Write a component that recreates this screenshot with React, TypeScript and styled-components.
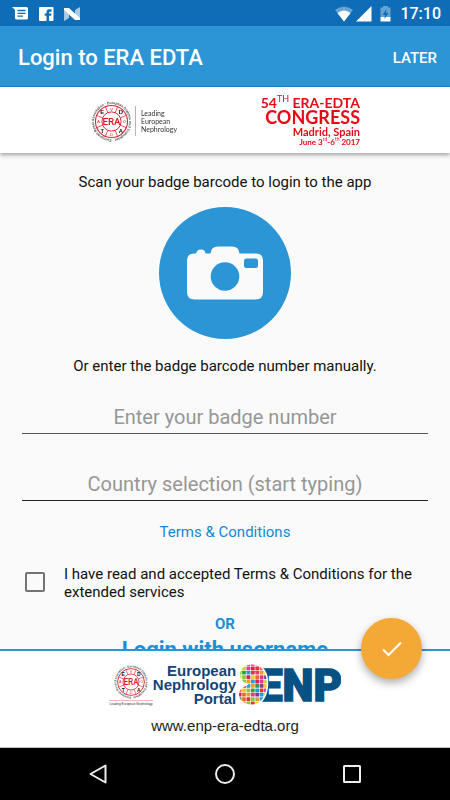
import React from "react";
import styled, { createGlobalStyle } from "styled-components";

const GlobalStyle = createGlobalStyle`
  * { box-sizing: border-box; }
  body { margin: 0; background: #fafafa; font-family: Roboto, sans-serif; }
  button, input { font: inherit; }
`;

const Screen = styled.div`
  height: 100vh;
  display: flex;
  flex-direction: column;
  color: #111;
  font-size: 15px;
`;

const StatusBar = styled.div`
  flex: none;
  height: 26px;
  padding: 2px 9px 0 12px;
  display: flex;
  align-items: center;
  justify-content: space-between;
  background: #0f6db7;
  color: #fff;
`;

const StatusGroup = styled.div<{ $gap: number }>`
  display: flex;
  align-items: center;
  gap: ${(p) => p.$gap}px;
`;

const Clock = styled.time`
  padding-left: 4px;
  font-size: 16px;
  font-weight: 500;
  line-height: 20px;
`;

const AppBar = styled.header`
  flex: none;
  height: 61px;
  padding: 3px 13px 0 18px;
  display: flex;
  align-items: center;
  justify-content: space-between;
  background: #2b95d5;
  border-bottom: 1px solid #1489d2;
  color: #fff;
`;

const Title = styled.h1`
  margin: 0;
  font-size: 22px;
  font-weight: 500;
`;

const LaterButton = styled.button`
  padding: 0;
  border: 0;
  background: none;
  color: #fff;
  font-size: 15px;
  font-weight: 500;
  cursor: pointer;
`;

const Banner = styled.section`
  flex: none;
  z-index: 1;
  height: 66px;
  padding: 2px 0 0;
  display: grid;
  grid-template-columns: 1fr 1fr;
  align-items: center;
  background: #fff;
  box-shadow: 0 2px 4px rgba(0, 0, 0, 0.35);
`;

const Society = styled.div`
  justify-self: center;
  padding-left: 42px;
  display: flex;
  align-items: center;
`;

const SocietyName = styled.div`
  margin-left: 2px;
  padding: 3px 0 3px 5px;
  border-left: 1px solid #e3a0a8;
  color: #333;
  font-family: Lato, sans-serif;
  font-size: 7px;
  line-height: 8px;
`;

const Congress = styled.div`
  justify-self: end;
  margin-right: 90px;
  display: flex;
  flex-direction: column;
  align-items: flex-end;
  color: #e60a14;
  font-family: Lato, sans-serif;
  font-weight: 700;
  white-space: nowrap;
`;

const CongressLine = styled.div<{ $size: number; $height: number }>`
  font-size: ${(p) => p.$size}px;
  line-height: ${(p) => p.$height}px;
`;

const Ordinal = styled.sup<{ $size: number }>`
  font-size: ${(p) => p.$size}px;
  font-weight: 400;
  line-height: 0;
`;

const Main = styled.main`
  flex: 1;
  min-height: 0;
  overflow-y: auto;
  scrollbar-width: none;
  padding: 19px 22px 0;
  display: flex;
  flex-direction: column;
  align-items: center;
  background: #fafafa;
  & > * { flex: none; }
`;

const Hint = styled.p`
  margin: 0;
  line-height: 20px;
  text-align: center;
`;

const ScanButton = styled.button`
  margin: 15px 0 17px;
  width: 132px;
  height: 132px;
  padding: 0;
  border: 0;
  border-radius: 50%;
  background: #2b95d5;
  cursor: pointer;
  svg { display: block; margin: 0 auto; }
`;

const Field = styled.input<{ $line: string }>`
  width: 100%;
  height: 34px;
  margin-top: 24px;
  padding: 0;
  border: 0;
  border-bottom: 1px solid ${(p) => p.$line};
  border-radius: 0;
  outline: 0;
  background: none;
  color: #111;
  font-size: 20px;
  text-align: center;
  & + & { margin-top: 33px; }
  &::placeholder { color: #969696; opacity: 1; }
`;

const TermsLink = styled.a`
  margin-top: 21px;
  line-height: 20px;
  color: #1588d0;
  text-decoration: none;
`;

const Consent = styled.label`
  align-self: stretch;
  margin-top: 23px;
  padding-left: 3px;
  display: grid;
  grid-template-columns: 20px 1fr;
  column-gap: 19px;
  align-items: center;
  line-height: 18px;
`;

const Checkbox = styled.input`
  appearance: none;
  width: 20px;
  height: 20px;
  margin: 0 0 2px;
  border: 2px solid #737373;
  border-radius: 2px;
  &:checked { background: #2b95d5; }
`;

const Or = styled.div`
  margin-top: 13px;
  line-height: 20px;
  color: #1a8fd6;
  font-weight: 700;
`;

const UsernameLink = styled.a`
  margin-top: 2px;
  line-height: 28px;
  color: #1a8fd6;
  font-size: 22px;
  font-weight: 700;
  text-decoration: none;
`;

const Footer = styled.footer`
  flex: none;
  position: relative;
  height: 99px;
  padding-top: 13px;
  display: flex;
  flex-direction: column;
  align-items: center;
  background: #fff;
  border-top: 2px solid #2b95d5;
  border-bottom: 1px solid #b9bfbd;
`;

const Portal = styled.div`
  display: flex;
  height: 42px;
`;

const SealColumn = styled.div`
  width: 44px;
  display: flex;
  flex-direction: column;
  align-items: center;
`;

const PortalName = styled.div`
  margin-right: 2px;
  color: #134478;
  font-family: "Liberation Sans", sans-serif;
  font-size: 15px;
  font-weight: 700;
  line-height: 14px;
  text-align: right;
`;

const SiteLink = styled.a`
  margin-top: 10px;
  color: #222;
  font-family: "Liberation Sans", sans-serif;
  font-size: 15px;
  line-height: 20px;
  text-decoration: none;
`;

const ConfirmButton = styled.button`
  position: absolute;
  z-index: 2;
  top: -33px;
  right: 28px;
  width: 61px;
  height: 61px;
  padding: 0;
  border: 0;
  border-radius: 50%;
  display: grid;
  place-items: center;
  background: #f4a836;
  box-shadow: 0 4px 8px rgba(0, 0, 0, 0.32);
  cursor: pointer;
`;

const NavBar = styled.nav`
  flex: none;
  height: 52px;
  padding: 0 36px;
  display: flex;
  align-items: center;
  justify-content: center;
  gap: 64px;
  background: #000;
`;

const NavButton = styled.button`
  width: 63px;
  height: 40px;
  padding: 0;
  border: 0;
  display: grid;
  place-items: center;
  background: none;
  cursor: pointer;
`;

const diagonalLetters = [
  { c: "E", x: 12.5, y: 14.5 },
  { c: "D", x: 31.5, y: 14.5 },
  { c: "T", x: 12.5, y: 34 },
  { c: "A", x: 31.5, y: 34 },
];
const axisLetters = [
  { c: "V", x: 22, y: 11 },
  { c: "O", x: 35.3, y: 23.5 },
  { c: "D", x: 22, y: 36.5 },
  { c: "A", x: 8.7, y: 23.5 },
];

function Seal({ size, id }: { size: number; id: string }) {
  return (
    <svg width={size} height={size} viewBox="0 0 44 44" role="img" aria-label="ERA EDTA seal">
      <defs>
        <path id={id} d="M22 40 A18 18 0 1 1 22.1 40" />
      </defs>
      <text fontFamily="Liberation Sans, sans-serif" fontSize="3.6" fontWeight="700" fill="#444">
        <textPath href={`#${id}`}>European Renal Association · European Dialysis and Transplant</textPath>
      </text>
      <circle cx="22" cy="22" r="16.4" fill="#fff" stroke="#e0222f" strokeWidth="1.1" />
      <circle cx="22" cy="22" r="9.8" fill="none" stroke="#e0222f" strokeWidth="1" />
      <g stroke="#e0222f" strokeWidth="0.7">
        {[22.5, 67.5, 112.5, 157.5, 202.5, 247.5, 292.5, 337.5].map((a) => (
          <path key={a} d="M31.8 22 H38.4" transform={`rotate(${a} 22 22)`} />
        ))}
      </g>
      <g fontFamily="Liberation Sans, sans-serif" textAnchor="middle">
        {diagonalLetters.map((l) => (
          <text key={l.c} x={l.x} y={l.y} fontSize="6" fontWeight="700" fill="#111">{l.c}</text>
        ))}
        {axisLetters.map((l, i) => (
          <text key={i} x={l.x} y={l.y} fontSize="4.5" fill="#e0222f">{l.c}</text>
        ))}
      </g>
      <text x="22" y="25.6" fontFamily="Roboto, sans-serif" fontSize="10" fontWeight="500" fill="#e0121f" textAnchor="middle">ERA</text>
    </svg>
  );
}

const tones = ["#f39b1f", "#e5352b", "#2a9d50", "#f7c52b", "#e8368f", "#1f9fd8", "#8cc63e", "#ee6a28", "#7c3f98", "#c9d532", "#d91c5c"];

function EnpLogo() {
  return (
    <svg width="103" height="42" viewBox="0 0 103 42" role="img" aria-label="ENP">
      <defs>
        <clipPath id="kidney">
          <path d="M14 .5 C22 .5 27 6 28.5 15 C30 29 24 40.5 14 40.5 C6 40.5 1 36 1 30.5 C1 25.5 5 23 11 20.5 C5 18.5 2 15 2 11 C2 4.5 7 .5 14 .5Z" />
        </clipPath>
      </defs>
      <text x="20" y="37" fontFamily="Roboto, sans-serif" fontSize="44" fontWeight="900" fill="#075184" stroke="#075184" strokeWidth="1.5">ENP</text>
      <path d="M14 -.5 C23 -.5 29 6 30 15 C31.5 30 25 42 14 42 L14 20Z" fill="#fff" />
      <g clipPath="url(#kidney)">
        {Array.from({ length: 70 }, (_, i) => {
          const col = i % 7;
          const row = Math.floor(i / 7);
          return <rect key={i} x={col * 4.4 - 0.3} y={row * 4.4 - 2} width="3.8" height="3.8" rx="0.4" fill={tones[(col * 5 + row * 3 + ((col * row) % 4)) % tones.length]} />;
        })}
      </g>
    </svg>
  );
}

export default function App() {
  return (
    <>
      <GlobalStyle />
      <Screen>
        <StatusBar>
          <StatusGroup $gap={10}>
            <svg width="17" height="16" viewBox="0 0 17 16" aria-label="Message">
              <path d="M0 1 H14.5 Q16 1 16 2.5 V12 Q16 13.5 14.5 13.5 H4.5 Q3 13.5 3 12 V4Z" fill="#fff" />
              <path d="M5.5 4.5 H13.5 M5.5 7.3 H13.5 M5.5 10.1 H11" stroke="#0f6db7" strokeWidth="1.3" />
            </svg>
            <svg width="15" height="16" viewBox="0 0 15 16" aria-label="Facebook">
              <rect x="0" y="1" width="14.5" height="14" rx="1" fill="#fff" />
              <path d="M7.5 15 V9.8 H5.7 V7.4 H7.5 V6 Q7.5 3.3 10.3 3.3 H12.5 V5.7 H11 Q10.1 5.7 10.1 6.6 V7.4 H12.5 L12.1 9.8 H10.1 V15Z" fill="#0f6db7" />
            </svg>
            <svg width="17" height="16" viewBox="0 0 17 16" aria-label="Android N">
              <path d="M0 2 L5 6 V12 L0 15Z M11 4 L16 1 V14 L11 10Z" fill="#a9cae5" />
              <path d="M0 2 H5 L16 12 V14 H11 L0 4Z" fill="#fff" />
            </svg>
          </StatusGroup>
          <StatusGroup $gap={3}>
            <svg width="18" height="16" viewBox="0 0 18 16" aria-label="Wi-Fi">
              <path d="M0 4 Q9 -3 18 4 L9 15.5Z" fill="#65a3d2" />
              <path d="M2.5 7 Q9 1.8 15.5 7 L9 15.5Z" fill="#fff" />
            </svg>
            <svg width="16" height="16" viewBox="0 0 16 16" aria-label="Signal">
              <path d="M0 15.5 L15.5 0 V15.5Z" fill="#fff" />
            </svg>
            <svg width="18" height="16" viewBox="0 0 18 16" aria-label="Battery charging">
              <path d="M8 1.5 V0 H13 V1.5 H15.5 V11 H5.5 V1.5Z" fill="#65a3d2" />
              <path d="M5.5 11 H15.5 V15.5 H5.5Z" fill="#fff" />
              <path d="M11.5 3 L7.5 9 H10 L9.5 13 L13.5 7 H11Z" fill="#0f6db7" />
            </svg>
            <Clock>17:10</Clock>
          </StatusGroup>
        </StatusBar>
        <AppBar>
          <Title>Login to ERA EDTA</Title>
          <LaterButton type="button">LATER</LaterButton>
        </AppBar>
        <Banner>
          <Society>
            <Seal size={43} id="seal-ring-banner" />
            <SocietyName>Leading<br />European<br />Nephrology</SocietyName>
          </Society>
          <Congress>
            <CongressLine $size={14} $height={13}>54<Ordinal $size={9}>TH</Ordinal> ERA-EDTA</CongressLine>
            <CongressLine $size={18} $height={16}>CONGRESS</CongressLine>
            <CongressLine $size={11} $height={13}>Madrid, Spain</CongressLine>
            <CongressLine $size={8} $height={9}>June 3<Ordinal $size={5}>rd</Ordinal>-6<Ordinal $size={5}>th</Ordinal> 2017</CongressLine>
          </Congress>
        </Banner>
        <Main>
          <Hint>Scan your badge barcode to login to the app</Hint>
          <ScanButton type="button" aria-label="Scan badge barcode">
            <svg width="76" height="54" viewBox="0 0 76 54">
              <path d="M7 7.5 H9 Q10 3.5 14 3.5 Q18 3.5 18.5 7.5 H23.5 Q24 .5 31 .5 H45 Q52 .5 52.5 7.5 H69 Q76 7.5 76 14.5 V46 Q76 53.5 68.5 53.5 H7.5 Q0 53.5 0 46 V14.5 Q0 7.5 7 7.5Z" fill="#fafafa" />
              <circle cx="38" cy="30.5" r="14.3" fill="#2b95d5" />
              <rect x="57" y="12.5" width="14" height="9.5" rx="2.5" fill="#2b95d5" />
            </svg>
          </ScanButton>
          <Hint>Or enter the badge barcode number manually.</Hint>
          <Field $line="#555" aria-label="Badge number" placeholder="Enter your badge number" />
          <Field $line="#222" aria-label="Country" placeholder="Country selection (start typing)" />
          <TermsLink href="#terms">Terms &amp; Conditions</TermsLink>
          <Consent>
            <Checkbox type="checkbox" />
            <span>I have read and accepted Terms &amp; Conditions for the extended services</span>
          </Consent>
          <Or>OR</Or>
          <UsernameLink href="#username">Login with username</UsernameLink>
        </Main>
        <Footer>
          <ConfirmButton type="button" aria-label="Confirm">
            <svg width="20" height="16" viewBox="0 0 20 16">
              <path d="M1 8.5 L6.5 14 L19 1.5" fill="none" stroke="#fff" strokeWidth="2" />
            </svg>
          </ConfirmButton>
          <Portal>
            <SealColumn>
              <Seal size={36} id="seal-ring-footer" />
              <svg width="44" height="6" viewBox="0 0 44 6" role="img" aria-label="Leading European Nephrology">
                <path d="M0 .5 H44" stroke="#eba8ae" strokeWidth="0.8" />
                <text x="22" y="4.8" textAnchor="middle" fontFamily="Liberation Sans, sans-serif" fontSize="3.2" fill="#333">Leading European Nephrology</text>
              </svg>
            </SealColumn>
            <PortalName>European<br />Nephrology<br />Portal</PortalName>
            <EnpLogo />
          </Portal>
          <SiteLink href="#portal">www.enp-era-edta.org</SiteLink>
        </Footer>
        <NavBar aria-label="System">
          <NavButton type="button" aria-label="Back">
            <svg width="18" height="20" viewBox="0 0 18 20"><path d="M1.5 10 L16.5 1.5 V18.5Z" fill="none" stroke="#eee" strokeWidth="2" strokeLinejoin="round" /></svg>
          </NavButton>
          <NavButton type="button" aria-label="Home">
            <svg width="20" height="20" viewBox="0 0 20 20"><circle cx="10" cy="10" r="9" fill="none" stroke="#eee" strokeWidth="2" /></svg>
          </NavButton>
          <NavButton type="button" aria-label="Recent apps">
            <svg width="18" height="18" viewBox="0 0 18 18"><rect x="1" y="1" width="16" height="16" rx="0.5" fill="none" stroke="#eee" strokeWidth="2" /></svg>
          </NavButton>
        </NavBar>
      </Screen>
    </>
  );
}
